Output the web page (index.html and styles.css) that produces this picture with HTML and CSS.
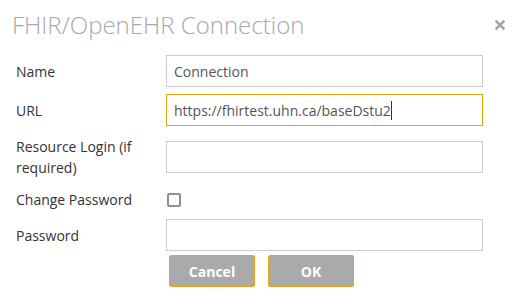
FILE: index.html
```html
<!DOCTYPE html>
<html lang="en">
  <head>
    <meta charset="UTF-8" />
    <title>FHIR/OpenEHR Connection</title>
    <link rel="stylesheet" href="styles.css">
  </head>
  <body>
    <div class="dialog">
      <div class="dialog-header">
        <h1>FHIR/OpenEHR Connection</h1>
        <button class="close-button" aria-label="Close">
          <svg width="10" height="10" viewBox="0 0 10 10">
            <path d="M1.5 1.5 L8.5 8.5 M8.5 1.5 L1.5 8.5" stroke="#a6a6a6" stroke-width="2.6" stroke-linecap="square" />
          </svg>
        </button>
      </div>

      <form class="dialog-form">
        <div class="form-row row-name">
          <label class="form-label">Name</label>
          <input class="form-input" type="text" value="Connection" />
        </div>
        <div class="form-row row-url">
          <label class="form-label">URL</label>
          <div class="form-input focused">https://fhirtest.uhn.ca/baseDstu2<span class="caret"></span></div>
        </div>
        <div class="form-row row-login">
          <label class="form-label">Resource Login (if required)</label>
          <input class="form-input" type="text" />
        </div>
        <div class="form-row row-check">
          <label class="form-label">Change Password</label>
          <span class="checkbox"></span>
        </div>
        <div class="form-row row-password">
          <label class="form-label">Password</label>
          <input class="form-input" type="password" />
        </div>
        <div class="form-actions">
          <button type="button" class="action-button">Cancel</button>
          <button type="button" class="action-button">OK</button>
        </div>
      </form>
    </div>
  </body>
</html>
```

FILE: styles.css
```css
* {
  margin: 0;
  padding: 0;
  box-sizing: border-box;
}

body {
  font-family: "Open Sans", "Liberation Sans", sans-serif;
  background: #ffffff;
  color: #333333;
  width: 520px;
  height: 299px;
  overflow: hidden;
}

.dialog {
  padding: 0 0 0 16px;
}

.dialog-header {
  height: 47px;
  display: flex;
  align-items: center;
  justify-content: space-between;
  padding-right: 15px;
}

.dialog-header h1 {
  font-size: 24px;
  font-weight: 300;
  color: #a8a8a8;
  margin-left: -4px;
  margin-top: 1px;
}

.close-button {
  background: none;
  border: none;
  width: 10px;
  height: 10px;
  display: flex;
  margin-top: 2px;
}

.dialog-form {
  display: flex;
  flex-direction: column;
  padding-top: 8px;
}

.form-row {
  display: flex;
  align-items: center;
}

.form-label {
  width: 150px;
  padding-right: 14px;
  font-size: 14px;
  line-height: 21px;
  color: #333333;
}

.form-input {
  width: 317px;
  height: 32px;
  border: 1px solid #cccccc;
  padding: 0 7px;
  font-family: inherit;
  font-size: 14px;
  color: #555555;
  background: #ffffff;
  outline: none;
}

.form-input.focused {
  border-color: #f0a30a;
  display: flex;
  align-items: center;
}

.caret {
  display: inline-block;
  width: 1px;
  height: 19px;
  background: #333333;
}

.row-name {
  height: 32px;
  margin-bottom: 7px;
}

.row-url {
  height: 32px;
}

.row-login {
  height: 47px;
  margin-top: 7px;
}

.row-check {
  height: 39px;
}

.row-password {
  height: 32px;
}

.checkbox {
  width: 14px;
  height: 14px;
  border: 2px solid #8c8c9b;
  border-radius: 2px;
  margin-left: 1px;
}

.form-actions {
  display: flex;
  gap: 13px;
  padding-left: 153px;
  margin-top: 4px;
}

.action-button {
  width: 86px;
  height: 32px;
  background: #aaaaaa;
  border: 1px solid #f0a30a;
  border-radius: 2px;
  color: #ffffff;
  font-family: inherit;
  font-size: 14px;
  font-weight: 700;
}
```
